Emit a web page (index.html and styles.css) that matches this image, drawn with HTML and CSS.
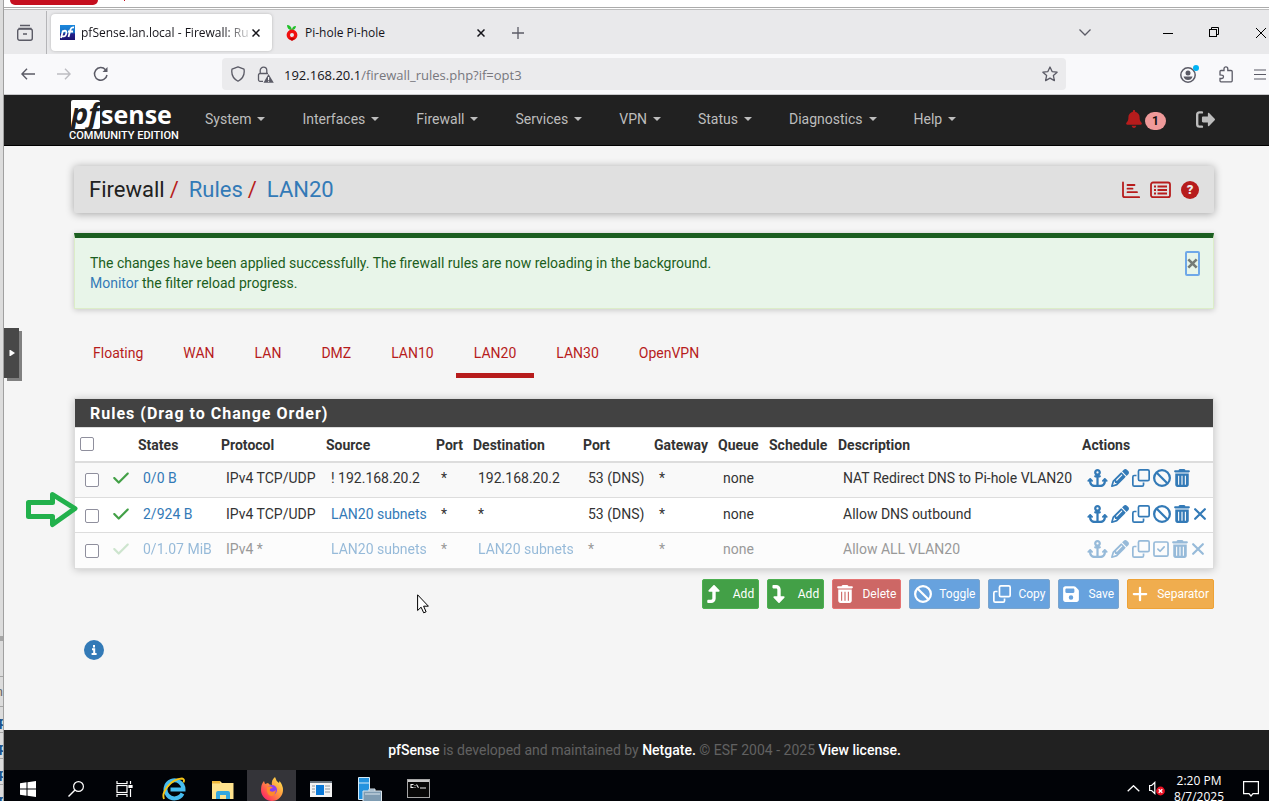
FILE: index.html
```html
<!DOCTYPE html>
<html lang="en">
<head>
<meta charset="utf-8">
<title>pfSense.lan.local - Firewall: Rules: LAN20</title>
<link rel="stylesheet" href="styles.css">
</head>
<body>
<svg class="sprite" aria-hidden="true">
  <symbol id="check" viewBox="0 0 448 512"><path fill="currentColor" d="M438.600 105.400c12.500 12.500 12.500 32.800 0 45.300l-256 256c-12.500 12.500-32.800 12.500-45.300 0l-128-128c-12.500-12.500-12.500-32.800 0-45.300s32.800-12.500 45.300 0L160 338.700 393.400 105.400c12.500-12.500 32.800-12.500 45.300 0z"/></symbol>
  <symbol id="anchor" viewBox="0 0 576 512"><path fill="currentColor" d="M320 96a32 32 0 1 1 -64 0 32 32 0 1 1 64 0zm21.100 80C367 158.800 384 129.400 384 96c0-53-43-96-96-96s-96 43-96 96c0 33.400 17 62.800 42.900 80H224c-17.700 0-32 14.300-32 32s14.300 32 32 32h32V448H208c-53 0-96-43-96-96v-6.100l7 7c9.400 9.400 24.600 9.400 33.900 0s9.400-24.600 0-33.900L97 263c-9.400-9.400-24.600-9.400-33.900 0L7 319c-9.400 9.400-9.400 24.600 0 33.900s24.600 9.400 33.900 0l7-7V352c0 88.400 71.600 160 160 160h160c88.400 0 160-71.600 160-160v-6.100l7 7c9.400 9.400 24.600 9.400 33.900 0s9.400-24.600 0-33.900l-56-56c-9.400-9.400-24.600-9.400-33.900 0l-56 56c-9.400 9.400-9.400 24.600 0 33.900s24.600 9.400 33.900 0l7-7V352c0 53-43 96-96 96H320V240h32c17.700 0 32-14.300 32-32s-14.300-32-32-32H341.100z"/></symbol>
  <symbol id="pencil" viewBox="0 0 512 512"><path fill="currentColor" d="M410.300 231l11.300-11.300-33.900-33.900-62.100-62.100L291.700 89.800l-11.300 11.300-22.600 22.600L58.600 322.900c-10.400 10.400-18 23.300-22.200 37.400L1 480.700c-2.500 8.400-.2 17.500 6.100 23.700s15.300 8.500 23.700 6.100l120.300-35.400c14.100-4.200 27-11.800 37.400-22.200L387.700 253.700 410.300 231zM160 399.400l-9.100 22.700c-4 3.100-8.500 5.400-13.300 6.900L59.400 452l23-78.100c1.400-4.900 3.800-9.400 6.900-13.300l22.700-9.100v32c0 8.800 7.200 16 16 16h32zM362.700 18.700L348.300 33.200 325.700 55.800 314.300 67.100l33.900 33.900 62.100 62.100 33.900 33.900 11.300-11.300 22.600-22.600 14.500-14.500c25-25 25-65.500 0-90.500L453.300 18.700c-25-25-65.500-25-90.500 0zm-47.400 168l-144 144c-6.200 6.200-16.400 6.200-22.600 0s-6.200-16.400 0-22.600l144-144c6.200-6.200 16.400-6.200 22.600 0s6.200 16.400 0 22.600z"/></symbol>
  <symbol id="clone" viewBox="0 0 512 512"><g fill="none" stroke="currentColor" stroke-width="48"><rect x="184" y="24" width="304" height="304" rx="40"/><path d="M128 184H64a40 40 0 0 0-40 40v224a40 40 0 0 0 40 40h224a40 40 0 0 0 40-40v-64"/></g></symbol>
  <symbol id="ban" viewBox="0 0 512 512"><g fill="none" stroke="currentColor" stroke-width="64"><circle cx="256" cy="256" r="224"/><path d="M98 98l316 316"/></g></symbol>
  <symbol id="trash" viewBox="0 0 448 512"><path fill="currentColor" fill-rule="evenodd" d="M135.200 17.700C140.600 6.800 151.700 0 163.800 0H284.200c12.100 0 23.200 6.800 28.600 17.700L320 32h96c17.700 0 32 14.300 32 32s-14.300 32-32 32H32C14.300 96 0 81.700 0 64s14.300-32 32-32h96zM32 128H416V448c0 35.300-28.700 64-64 64H96c-35.300 0-64-28.700-64-64zM112 192v256h32V192zM208 192v256h32V192zM304 192v256h32V192z"/></symbol>
  <symbol id="xmark" viewBox="0 0 384 512"><path fill="none" stroke="currentColor" stroke-width="62" stroke-linecap="round" d="M54 118l276 276M330 118L54 394"/></symbol>
  <symbol id="square-check" viewBox="0 0 448 512"><g fill="none" stroke="currentColor" stroke-width="48"><rect x="24" y="56" width="400" height="400" rx="40"/><path stroke-linecap="round" stroke-linejoin="round" d="M136 260l62 60 116-124"/></g></symbol>
  <symbol id="turn-up" viewBox="0 0 384 512"><path fill="currentColor" d="M350 177.500c3.800-8.800 2-19-4.600-26l-136-144C204.900 2.700 198.600 0 192 0s-12.900 2.700-17.400 7.500l-136 144c-6.600 7-8.400 17.200-4.600 26S46.400 192 56 192h88v192c0 17.700-14.300 32-32 32H32c-17.700 0-32 14.300-32 32v32c0 17.700 14.300 32 32 32h80c70.700 0 128-57.300 128-128V192h88c9.600 0 18.200-5.700 22-14.500z"/></symbol>
  <symbol id="turn-down" viewBox="0 0 384 512"><use href="#turn-up" width="384" height="512" transform="matrix(1 0 0 -1 0 512)"/></symbol>
  <symbol id="floppy" viewBox="0 0 448 512"><path fill="currentColor" fill-rule="evenodd" d="M64 32C28.700 32 0 60.700 0 96v320c0 35.300 28.700 64 64 64h320c35.300 0 64-28.700 64-64V173c0-17-6.700-33-18.700-45L352 51c-12-12-28-19-45-19zM64 128c0-18 14-32 32-32h192c18 0 32 14 32 32v64c0 18-14 32-32 32H96c-18 0-32-14-32-32zM224 288a64 64 0 1 1 0 128 64 64 0 1 1 0-128z"/></symbol>
  <symbol id="plus" viewBox="0 0 448 512"><path fill="none" stroke="currentColor" stroke-width="64" stroke-linecap="round" d="M224 80v352M48 256h352"/></symbol>
  <symbol id="bell" viewBox="0 0 448 512"><path fill="currentColor" d="M224 0c-17.700 0-32 14.300-32 32V51.200C119 66 64 130.600 64 208v18.800c0 47-17.300 92.400-48.500 127.600l-7.400 8.300c-8.400 9.400-10.400 22.900-5.300 34.400S19.400 416 32 416H416c12.600 0 24-7.400 29.200-18.900s3.100-25-5.300-34.400l-7.400-8.300C401.300 319.200 384 273.900 384 226.800V208c0-77.400-55-142-128-156.800V32c0-17.700-14.300-32-32-32zm45.300 493.300c12-12 18.700-28.300 18.700-45.300H160c0 17 6.700 33.300 18.700 45.300s28.300 18.700 45.300 18.700s33.300-6.700 45.300-18.700z"/></symbol>
  <symbol id="signout" viewBox="0 0 512 512"><path fill="none" stroke="currentColor" stroke-width="64" stroke-linecap="round" d="M160 64H96a64 64 0 0 0-64 64v256a64 64 0 0 0 64 64h64"/><path fill="currentColor" d="M320 96c0-18 20-26 33-14l150 154c11 12 11 28 0 40L353 430c-13 12-33 4-33-14v-80H192c-18 0-32-14-32-32v-96c0-18 14-32 32-32h128z"/></symbol>
</svg>

<div class="desktop">
  <aside class="behind-left" aria-hidden="true">
    <i class="notch"></i>
    <span>n</span><b>p</b><b>p</b><b>p</b><b>p</b>
  </aside>
  <div class="window">
    <div class="behind-top"><i class="pill"></i><i class="tick"></i></div>

    <header class="tabbar">
      <button class="recent" aria-label="Recent browsing"><svg width="18" height="18" viewBox="0 0 18 18" fill="none" stroke="#5b5b66" stroke-width="1.400"><path d="M4 1.500h10M2.500 4.500h13"/><path d="M1.700 7a2 2 0 0 1 2-2h10.600a2 2 0 0 1 2 2v7.300a2 2 0 0 1-2 2H3.700a2 2 0 0 1-2-2zM7 10h4"/></svg></button>
      <div class="tab active">
        <svg width="15" height="15" viewBox="0 0 15 15"><defs><linearGradient id="fav" x1="0" y1="0" x2="0" y2="1"><stop offset="0" stop-color="#1a88dd"/><stop offset=".5" stop-color="#1a6fc4"/><stop offset=".6" stop-color="#23208a"/><stop offset="1" stop-color="#1c1470"/></linearGradient></defs><rect width="15" height="15" fill="url(#fav)"/><g fill="none" stroke="#fff" stroke-width="1.800"><path d="M1 13L3 5.500M2.500 6.500c4-2 4.500.5 3.500 3s-3 2-4 1.500"/><path d="M8.500 12l2-7.500q.8-2.500 3.500-2M8 6.500h5"/></g></svg>
        <span class="tab-title">pfSense.lan.local - Firewall: Rules</span>
        <button class="tab-close" aria-label="Close tab"><svg width="8" height="8" viewBox="0 0 8 8"><path d="M.5.5l7 7M7.500.5l-7 7" stroke="#15141a" stroke-width="1.500"/></svg></button>
      </div>
      <div class="tab second">
        <svg width="12" height="17" viewBox="0 0 12 17"><path d="M1 1q4 0 5 5Q1 6 1 1zM6 6q0-4 4-4-.5 4-4 4z" fill="#1fc129"/><circle cx="6" cy="11" r="3.700" fill="none" stroke="#f01010" stroke-width="3.400"/><path d="M3 14l3 3 3-3z" fill="#c40000"/></svg>
        <span class="tab-title">Pi-hole Pi-hole</span>
        <button class="tab-close" aria-label="Close tab"><svg width="8" height="8" viewBox="0 0 8 8"><path d="M.5.5l7 7M7.500.5l-7 7" stroke="#15141a" stroke-width="1.500"/></svg></button>
      </div>
      <button class="newtab" aria-label="New tab"><svg width="12" height="12" viewBox="0 0 12 12"><path d="M6 0v12M0 6h12" stroke="#5b5b66" stroke-width="1.300"/></svg></button>
      <div class="winctl">
        <button aria-label="List all tabs"><svg width="12" height="7" viewBox="0 0 12 7"><path d="M.5.5L6 6l5.500-5.500" fill="none" stroke="#5b5b66" stroke-width="1.300"/></svg></button>
        <button class="min" aria-label="Minimize"><svg width="10" height="10" viewBox="0 0 10 10"><path d="M0 5.500h10" stroke="#000"/></svg></button>
        <button aria-label="Restore"><svg width="11" height="11" viewBox="0 0 11 11" fill="none" stroke="#000"><rect x=".5" y="2.500" width="7" height="7"/><path d="M2.500 2.500v-2h7v7h-2"/></svg></button>
        <button aria-label="Close"><svg width="10" height="10" viewBox="0 0 10 10"><path d="M0 0l10 10M10 0L0 10" stroke="#000"/></svg></button>
      </div>
    </header>

    <div class="toolbar">
      <div class="navbtns">
        <button aria-label="Back"><svg width="14" height="12" viewBox="0 0 14 12"><path d="M14 6H1M6 .7L.9 6 6 11.300" fill="none" stroke="#5b5b66" stroke-width="1.400"/></svg></button>
        <button aria-label="Forward" disabled><svg width="14" height="12" viewBox="0 0 14 12"><path d="M0 6h13M8 .7L13.100 6 8 11.300" fill="none" stroke="#bdbdc2" stroke-width="1.400"/></svg></button>
        <button aria-label="Reload"><svg width="16" height="16" viewBox="0 0 16 16"><path d="M14 9a6.300 6.300 0 1 1-1.500-5.300" fill="none" stroke="#5b5b66" stroke-width="1.500"/><path d="M14.500 1v5H9.500z" fill="#5b5b66"/></svg></button>
      </div>
      <div class="urlbar">
        <svg width="16" height="16" viewBox="0 0 16 16"><path d="M8 .8l6 2.400q1.400 8-6 12-7.400-4-6-12z" fill="none" stroke="#5b5b66" stroke-width="1.300" stroke-linejoin="round"/></svg>
        <svg class="lock" width="17" height="17" viewBox="0 0 17 17"><path d="M6 15.300H3a1.500 1.500 0 0 1-1.500-1.500V9A1.500 1.500 0 0 1 3 7.500h8M3.200 7V4.500a3.300 3.300 0 0 1 6.600 0V7" fill="none" stroke="#5b5b66" stroke-width="1.300"/><path d="M11.500 8L16.800 16.800H6.500z" fill="#5b5b66"/><path d="M11.600 11v3M11.600 14.700v1" stroke="#fff" stroke-width="1.100"/></svg>
        <div class="url">192.168.20.1<span>/firewall_rules.php?if=opt3</span></div>
        <button aria-label="Bookmark"><svg width="16" height="16" viewBox="0 0 16 16"><path d="M8 1l2.100 4.600 5 .6-3.700 3.400 1 5L8 12.100l-4.400 2.500 1-5L.9 6.200l5-.6z" fill="none" stroke="#5b5b66" stroke-width="1.300" stroke-linejoin="round"/></svg></button>
      </div>
      <div class="tools">
        <button aria-label="Account"><svg width="20" height="20" viewBox="0 0 20 20"><circle cx="9" cy="11" r="7.200" fill="none" stroke="#5b5b66" stroke-width="1.500"/><circle cx="9" cy="9" r="2.500" fill="#5b5b66"/><path d="M4.500 12.500h9q-1 3.500-4.500 3.500t-4.500-3.500z" fill="#5b5b66"/><circle cx="17" cy="4" r="3" fill="#00b3f4"/></svg></button>
        <button aria-label="Extensions"><svg width="15" height="17" viewBox="0 0 15 17"><path d="M1 9V5.500q0-1 1-1h3V2.800a1.900 1.900 0 0 1 3.800 0v1.700H12q1.200 0 1.200 1v9.300q0 1-1 1H2q-1 0-1-1V12.500h1.800a1.700 1.700 0 0 0 0-3.400z" fill="none" stroke="#5b5b66" stroke-width="1.300"/></svg></button>
        <button aria-label="Menu"><svg width="12" height="11" viewBox="0 0 12 11"><path d="M0 1h12M0 5.500h12M0 10h12" stroke="#5b5b66" stroke-width="1.200"/></svg></button>
      </div>
    </div>

    <nav class="navbar">
      <a class="brand" href="#"><span class="brand-name"><span class="pf">pf</span>sense</span><span class="edition">COMMUNITY EDITION</span></a>
      <a href="#" class="menu">System</a><a href="#" class="menu">Interfaces</a><a href="#" class="menu">Firewall</a><a href="#" class="menu">Services</a><a href="#" class="menu">VPN</a><a href="#" class="menu">Status</a><a href="#" class="menu">Diagnostics</a><a href="#" class="menu">Help</a>
      <div class="nav-right">
        <a href="#" class="alerts" aria-label="Notices"><svg width="16" height="18"><use href="#bell"/></svg><span class="badge">1</span></a>
        <a href="#" class="logout" aria-label="Log out"><svg width="19" height="19"><use href="#signout"/></svg></a>
      </div>
    </nav>

    <main>
      <header class="page-header">
        <h1>Firewall<i>/</i><a href="#">Rules</a><i>/</i><a href="#">LAN20</a></h1>
        <div class="header-icons">
          <a href="#" aria-label="Status"><svg width="18" height="18" viewBox="0 0 18 18" fill="none" stroke="currentColor" stroke-width="1.800" stroke-linecap="round"><path d="M1 1.500v13q0 1.700 1.700 1.700H17.200M5.500 4h7M5.500 7.700h5M5.500 11.200h9.500"/></svg></a>
          <a href="#" aria-label="Log"><svg width="21" height="18" viewBox="0 0 21 18" fill="none" stroke="currentColor" stroke-width="1.800"><rect x="1" y="1.500" width="19" height="14.700" rx="2"/><path d="M4 5.500h2M7.500 5.500H17M4 9h2M7.500 9H17M4 12.500h2M7.500 12.500H17"/></svg></a>
          <a href="#" class="help" aria-label="Help">?</a>
        </div>
      </header>

      <div class="alert" role="alert">
        <p>The changes have been applied successfully. The firewall rules are now reloading in the background.<br><a href="#">Monitor</a> the filter reload progress.</p>
        <button class="dismiss" aria-label="Close"><svg width="11" height="11" viewBox="0 0 10 10"><path d="M1.200 1.200l7.600 7.600M8.800 1.200L1.200 8.800" stroke="#747b75" stroke-width="2.400"/></svg></button>
      </div>

      <nav class="iface-tabs">
        <a href="#">Floating</a><a href="#">WAN</a><a href="#">LAN</a><a href="#">DMZ</a><a href="#">LAN10</a><a href="#" class="current">LAN20</a><a href="#">LAN30</a><a href="#">OpenVPN</a>
      </nav>

      <section class="panel">
        <h2>Rules (Drag to Change Order)</h2>
        <table>
          <colgroup><col class="c-box"><col class="c-ok"><col class="c-states"><col class="c-proto"><col class="c-addr"><col class="c-port"><col class="c-addr"><col class="c-dport"><col class="c-gw"><col class="c-queue"><col class="c-sched"><col><col class="c-act"></colgroup>
          <thead><tr><th><input type="checkbox" aria-label="Select all"></th><th></th><th>States</th><th>Protocol</th><th>Source</th><th>Port</th><th>Destination</th><th>Port</th><th>Gateway</th><th>Queue</th><th>Schedule</th><th>Description</th><th>Actions</th></tr></thead>
          <tbody>
            <tr><td><input type="checkbox" aria-label="Select rule 1"></td><td><svg class="ok" width="16" height="18"><use href="#check"/></svg></td><td><a href="#">0/0 B</a></td><td>IPv4 TCP/UDP</td><td>! 192.168.20.2</td><td>*</td><td>192.168.20.2</td><td>53 (DNS)</td><td>*</td><td>none</td><td></td><td>NAT Redirect DNS to Pi-hole VLAN20</td>
              <td><div class="actions"><a href="#" aria-label="Move"><svg width="21" height="18"><use href="#anchor"/></svg></a><a href="#" aria-label="Edit"><svg width="18" height="18"><use href="#pencil"/></svg></a><a href="#" aria-label="Copy"><svg width="18" height="18"><use href="#clone"/></svg></a><a href="#" aria-label="Disable"><svg width="18" height="18"><use href="#ban"/></svg></a><a href="#" aria-label="Delete"><svg width="16" height="18"><use href="#trash"/></svg></a></div></td></tr>
            <tr><td><input type="checkbox" aria-label="Select rule 2"></td><td><svg class="ok" width="16" height="18"><use href="#check"/></svg></td><td><a href="#">2/924 B</a></td><td>IPv4 TCP/UDP</td><td><a href="#">LAN20 subnets</a></td><td>*</td><td>*</td><td>53 (DNS)</td><td>*</td><td>none</td><td></td><td>Allow DNS outbound</td>
              <td><div class="actions"><a href="#" aria-label="Move"><svg width="21" height="18"><use href="#anchor"/></svg></a><a href="#" aria-label="Edit"><svg width="18" height="18"><use href="#pencil"/></svg></a><a href="#" aria-label="Copy"><svg width="18" height="18"><use href="#clone"/></svg></a><a href="#" aria-label="Disable"><svg width="18" height="18"><use href="#ban"/></svg></a><a href="#" aria-label="Delete"><svg width="16" height="18"><use href="#trash"/></svg></a><a href="#" aria-label="Kill states"><svg width="14" height="18"><use href="#xmark"/></svg></a></div></td></tr>
            <tr class="disabled"><td><input type="checkbox" aria-label="Select rule 3"></td><td><svg class="ok" width="16" height="18"><use href="#check"/></svg></td><td><a href="#">0/1.07 MiB</a></td><td>IPv4 *</td><td><a href="#">LAN20 subnets</a></td><td>*</td><td><a href="#">LAN20 subnets</a></td><td>*</td><td>*</td><td>none</td><td></td><td>Allow ALL VLAN20</td>
              <td><div class="actions"><a href="#" aria-label="Move"><svg width="21" height="18"><use href="#anchor"/></svg></a><a href="#" aria-label="Edit"><svg width="18" height="18"><use href="#pencil"/></svg></a><a href="#" aria-label="Copy"><svg width="18" height="18"><use href="#clone"/></svg></a><a href="#" aria-label="Enable"><svg width="16" height="18"><use href="#square-check"/></svg></a><a href="#" aria-label="Delete"><svg width="16" height="18"><use href="#trash"/></svg></a><a href="#" aria-label="Kill states"><svg width="14" height="18"><use href="#xmark"/></svg></a></div></td></tr>
          </tbody>
        </table>
      </section>

      <div class="buttons">
        <button class="green"><svg width="14" height="18"><use href="#turn-up"/></svg><span>Add</span></button>
        <button class="green"><svg width="14" height="18"><use href="#turn-down"/></svg><span>Add</span></button>
        <button class="red"><svg width="16" height="18"><use href="#trash"/></svg><span>Delete</span></button>
        <button class="blue"><svg width="18" height="18"><use href="#ban"/></svg><span>Toggle</span></button>
        <button class="blue"><svg width="18" height="18"><use href="#clone"/></svg><span>Copy</span></button>
        <button class="blue"><svg width="16" height="18"><use href="#floppy"/></svg><span>Save</span></button>
        <button class="orange"><svg width="16" height="18"><use href="#plus"/></svg><span>Separator</span></button>
      </div>

      <button class="info" aria-label="Information"><svg width="20" height="20" viewBox="0 0 20 20"><circle cx="10" cy="10" r="10" fill="#337ab7"/><path d="M10 5v2.400M8 9.300h2.200V14M7.600 14h5" fill="none" stroke="#fff" stroke-width="2"/></svg></button>
    </main>

    <footer><a href="#">pfSense</a> is developed and maintained by <a href="#">Netgate.</a> © ESF 2004 - 2025 <a href="#">View license.</a></footer>

    <div class="taskbar">
      <button class="start" aria-label="Start"><svg width="16" height="16" viewBox="0 0 16 16" fill="#fff"><path d="M0 2.300L6.500 1.300V7.500H0zM7.500 1.200L16 0v7.500H7.500zM0 8.500h6.500v6.200L0 13.800zM7.500 8.500H16V16L7.500 14.800z"/></svg></button>
      <button aria-label="Search"><svg width="16" height="16" viewBox="0 0 16 16"><circle cx="10.500" cy="5.500" r="4.900" fill="none" stroke="#fff" stroke-width="1.200"/><path d="M7 9L.5 15.500" stroke="#fff" stroke-width="1.400"/></svg></button>
      <button aria-label="Task view"><svg width="17" height="16" viewBox="0 0 17 16" fill="none" stroke="#fff" stroke-width="1.200"><path d="M1 0v2.500h10V0M1 16v-2.500h10V16M14.500 0v3M14.500 8v8"/><rect x="1" y="4.500" width="10" height="7"/><path d="M13 4.500h3v2h-3z" fill="#fff"/></svg></button>
      <button aria-label="Internet Explorer"><svg width="24" height="24" viewBox="0 0 24 24"><path d="M20.500 16.500A9 9 0 1 1 21.500 12.500H8.500" fill="none" stroke="#47bdf0" stroke-width="4"/><path d="M2 22C-1 15 9 2 20 1.500q3 .5 1.500 4" fill="none" stroke="#f5c518" stroke-width="1.900"/></svg></button>
      <button aria-label="File Explorer"><svg width="22" height="20" viewBox="0 0 22 20"><path d="M0 2h8l2 2h11.500v16H0z" fill="#ffe38d"/><path d="M0 2h8v2.500H0z" fill="#f0b83a"/><path d="M4 20v-6q0-2 2-2h10q2 0 2 2v6h-4v-4H8v4z" fill="#35a8e0"/></svg></button>
      <button class="running" aria-label="Firefox"><svg width="24" height="24" viewBox="0 0 24 24"><defs><linearGradient id="fox" x1="1" y1="0" x2="0" y2="1"><stop offset="0" stop-color="#fff44f"/><stop offset=".45" stop-color="#ff9640"/><stop offset=".8" stop-color="#ff3a5a"/><stop offset="1" stop-color="#e0169c"/></linearGradient></defs><path d="M1 13q0-6 3-9l1 3 3-1q1 2 4 2-1-5 3-8 1 4 4 6l.5-2Q23 8 23 13a11 11 0 0 1-22 0z" fill="url(#fox)"/><circle cx="12" cy="13" r="5" fill="#8a3ff0"/><path d="M7 10q4-2 6 1-4 0-3 3 3 2 6-1-1 6-5 6-5-1-4-9z" fill="#ff8a2a"/></svg></button>
      <button aria-label="Application"><svg width="22" height="16" viewBox="0 0 22 16"><rect width="22" height="16" fill="#f3f3f3"/><path d="M0 0h22v2H0z" fill="#6c7680"/><rect x="6" y="4" width="8" height="10" fill="#0a78d7"/><path d="M2 5h3M2 8h3M2 11h3M15 5h5M15 8h5M15 11h5" stroke="#8d959c"/></svg></button>
      <button aria-label="Server Manager"><svg width="24" height="26" viewBox="0 0 24 26"><path d="M.5 1.500h11v22H.5z" fill="#2493df" stroke="#d7ecf9"/><path d="M1 7h10" stroke="#d7ecf9"/><path d="M5 15h18.500v11H5zM11 15v-2h6v2" fill="#7f9cb2" stroke="#dce6ed"/><path d="M7 18h15" stroke="#dce6ed"/></svg></button>
      <button aria-label="Command Prompt"><svg width="23" height="19" viewBox="0 0 23 19"><rect x=".5" y=".5" width="22" height="18" fill="#080808" stroke="#a6a6a6"/><path d="M1 1h21v2H1z" fill="#c9c9c9"/><path d="M6.500 5.500H4v3h2.500M8 6v.8M8 8v.8M9.500 5.500l2 3.200M13 9h6" fill="none" stroke="#eee" stroke-width="1.100"/></svg></button>
      <div class="tray">
        <svg width="13" height="7" viewBox="0 0 13 7"><path d="M.7 6.300L6.500.7l5.800 5.600" fill="none" stroke="#fff" stroke-width="1.300"/></svg>
        <svg width="16" height="15" viewBox="0 0 16 15"><path d="M.6 4.500h2l3.200-3v11l-3.200-3h-2z" fill="none" stroke="#fff" stroke-width="1.200"/><circle cx="11.500" cy="10" r="4.400" fill="#e81123"/><path d="M9.700 8.200l3.600 3.600M13.300 8.200l-3.600 3.600" stroke="#fff" stroke-width="1.300"/></svg>
        <div class="clock">2:20 PM<br>8/7/2025</div>
        <svg width="16" height="16" viewBox="0 0 16 16"><path d="M.6.6h14.800v12H10L8 15l-2-2.400H.6z" fill="none" stroke="#fff" stroke-width="1.200"/></svg>
      </div>
    </div>
  </div>

  <button class="handle" aria-label="Open side panel"><svg width="6" height="6" viewBox="0 0 6 6"><path d="M.5 0h1L6 3 1.500 6h-1z" fill="#fff"/></svg></button>
  <svg class="callout" width="52" height="38" viewBox="0 0 52 38"><path d="M2.500 12.500h24V4.500L49 18.500 26.500 34.500v-8h-24z" fill="none" stroke="#22b14c" stroke-width="5" stroke-linejoin="round"/></svg>
  <svg class="cursor" width="12" height="20" viewBox="0 0 12 20"><path d="M.6.8v15.700l3.500-3.300 2.600 5.600 2.400-1-2.500-5.600h4.800z" fill="#fff" stroke="#000" stroke-width="1"/></svg>
</div>
</body>
</html>
```
FILE: styles.css
```css
* { box-sizing: border-box; }

body {
  margin: 0;
  height: 100vh;
  overflow: hidden;
  background: #f5f5f5;
  color: #333;
  font: 14px/20px Roboto, "Liberation Sans", sans-serif;
}

a { color: #337ab7; text-decoration: none; }
svg { display: block; flex: none; }

button {
  display: flex;
  align-items: center;
  justify-content: center;
  padding: 0;
  border: 0;
  background: none;
  font: inherit;
}

.sprite { position: absolute; width: 0; height: 0; }

.desktop { position: relative; display: flex; min-height: 100vh; }

/* edge of the application behind the window */
.behind-left {
  flex: none;
  display: flex;
  flex-direction: column;
  align-items: flex-end;
  width: 4px;
  height: 100vh;
  overflow: hidden;
  background: #dcdcdc;
  border-right: 1px solid #a0a0a0;
}
.notch { flex: none; width: 4px; height: 5px; margin: 636px 0 35px; background: #a5a5a5; }
.behind-left span, .behind-left b {
  flex: none;
  width: 4px;
  height: 26px;
  border-top: 1px solid #a5a5a5;
  font-size: 13px;
  line-height: 30px;
}
.behind-left span { height: 30px; color: #666; direction: rtl; }
.behind-left b { color: #10508c; }

.window { flex: 1; min-width: 0; display: flex; flex-direction: column; }

.behind-top {
  display: flex;
  height: 10px;
  background: linear-gradient(#fff 7px, #ababab 7px 8px, #fff 8px 9px, #bdbdbd 9px);
}
.pill { width: 88px; height: 5px; margin-left: 6px; border-radius: 0 0 14px 14px; background: #c50f1f; }
.tick { width: 1px; height: 1px; margin-left: 26px; background: #c50f1f; }

/* browser chrome */
.tabbar {
  display: flex;
  height: 44px;
  padding-top: 1px;
  background: #e9e9eb;
  font: 12px/20px "Open Sans", "Noto Sans", sans-serif;
  color: #15141a;
}
.recent { width: 43px; border-right: 1px solid #b5b5b8; }
.tab { display: flex; align-items: center; width: 221px; margin: 3px 0 3px 4px; padding: 0 12px 0 9px; border-radius: 4px; }
.tab.active { background: #fff; box-shadow: 0 0 3px #8888; }
.tab.second { margin-left: 1px; padding: 0 9px 0 13px; }
.tab-title { flex: 1; overflow: hidden; margin: 0 4px 0 6px; white-space: nowrap; }
.second .tab-title { margin-left: 7px; }
.active .tab-title { -webkit-mask-image: linear-gradient(90deg, #000 85%, #0003); mask-image: linear-gradient(90deg, #000 85%, #0003); }
.newtab { width: 48px; }
.winctl { display: flex; margin-left: auto; gap: 36px; padding-right: 3px; }
.winctl .min { margin-left: 36px; }

.toolbar { display: flex; align-items: center; height: 41px; background: #f9f9fb; border-bottom: 1px solid #c9c9cb; }
.navbtns { display: flex; align-items: center; gap: 22px; padding-left: 17px; width: 218px; }
.urlbar {
  flex: 1;
  display: flex;
  align-items: center;
  height: 32px;
  padding: 0 8px;
  border-radius: 4px;
  background: #ebebed;
}
.lock { margin-left: 11px; }
.url { flex: 1; margin-left: 10px; padding-top: 2px; color: #15141a; font: 13px/20px "Open Sans", "Noto Sans", sans-serif; }
.url span { color: #77777d; }
.tools { display: flex; align-items: center; justify-content: flex-end; gap: 20px; width: 203px; padding-right: 3px; }

/* pfSense navigation */
.navbar { display: flex; align-items: center; height: 51px; padding: 0 54px 2px 65px; background: #212121; border-bottom: 1px solid #000; }
.navbar a { color: #bdbdbd; }
.brand { display: flex; flex-direction: column; width: 106px; margin-right: 12px; padding-top: 3px; }
.navbar .brand { color: #fff; }
.brand-name { display: flex; align-items: center; height: 30px; padding-left: 2px; font: bold 25px/28px "Open Sans", sans-serif; }
.pf { width: 29px; height: 29px; margin-right: 1px; border-radius: 2px; background: #fff; color: #212121; font-size: 29px; font-style: italic; line-height: 25px; }
.edition { font-size: 11px; font-weight: 500; line-height: 13px; white-space: nowrap; }
.menu { display: flex; align-items: center; gap: 6px; padding: 0 19px 0 18px; }
.menu::after { content: ""; border: 4px solid transparent; border-top-color: currentColor; border-bottom: 0; }
.nav-right { display: flex; align-items: center; gap: 30px; margin-left: auto; }
.alerts { display: flex; align-items: center; gap: 3px; }
.navbar .alerts { color: #b71c1c; }
.badge { min-width: 21px; height: 18px; margin-top: 4px; border-radius: 9px; background: #ef9a9a; color: #111; font-size: 12px; font-weight: 700; line-height: 18px; text-align: center; }

/* page body */
main { flex: 1; padding: 20px 55px 70px 70px; }

.page-header {
  display: flex;
  align-items: center;
  justify-content: space-between;
  height: 47px;
  padding: 0 15px;
  border-radius: 2px;
  background: #e0e0e0;
  box-shadow: 0 1px 8px #0005;
}
h1 { margin: 0; color: #212121; font-size: 22px; font-weight: 400; line-height: 26px; }
h1 i { margin: 0 10px 0 5px; color: #b71c1c; font-style: normal; }
.header-icons { display: flex; align-items: center; gap: 10px; }
.header-icons a { color: #b71c1c; }
.header-icons .help { width: 18px; height: 18px; border-radius: 50%; background: #b71c1c; color: #eee; font-size: 13px; font-weight: 900; line-height: 18px; text-align: center; }

.alert {
  display: flex;
  justify-content: space-between;
  margin-top: 20px;
  padding: 15px 13px 15px 15px;
  border: 1px solid #dcedc8;
  border-top: 5px solid #1b5e20;
  background: #e8f5e9;
  color: #1b5e20;
  box-shadow: 0 1px 6px #0003;
}
.alert p { margin: 0; }
.dismiss { width: 15px; height: 25px; margin-top: -2px; border: 2px solid #6fa8e8; border-radius: 2px; }

.iface-tabs { display: flex; flex-wrap: wrap; gap: 4px; margin-top: 29px; padding-left: 1px; }
.iface-tabs a { padding: 5px 18px 10px; border-bottom: 5px solid transparent; color: #b71c1c; }
.iface-tabs .current { border-bottom-color: #b71c1c; }

.panel { margin-top: 20px; border: 1px solid #ddd; background: #fff; box-shadow: 0 1px 8px #0003; }
.panel h2 { margin: 0; padding: 5px 15px 3px; background: #424242; color: #fff; font-size: 16px; font-weight: 700; line-height: 20px; letter-spacing: 1px; }

table { width: 100%; border-collapse: collapse; table-layout: fixed; border-top: 1px solid #ddd; }
.c-box { width: 28px; } .c-ok { width: 30px; } .c-states { width: 83px; } .c-proto { width: 105px; }
.c-addr { width: 110px; } .c-port { width: 37px; } .c-dport { width: 71px; } .c-gw { width: 64px; }
.c-queue { width: 51px; } .c-sched { width: 69px; } .c-act { width: 136px; }
th { height: 34px; padding: 2px 0 0 5px; text-align: left; font-weight: 700; white-space: nowrap; }
td { height: 35px; padding: 0 0 3px 10px; border-top: 1px solid #ddd; color: #333; white-space: nowrap; }
tbody tr:first-child td { height: 36px; padding-bottom: 4px; }
thead { border-bottom: 2px solid #ddd; }
tbody tr:nth-child(odd) { background: #f9f9f9; }
tbody tr.disabled { background: #fcfcfc; }
.disabled td > *:not(input) { opacity: .5; }
.disabled td { color: #999; }
.disabled td .ok { opacity: .25; }
input[type="checkbox"] {
  display: block;
  appearance: none;
  width: 14px;
  height: 14px;
  margin: 0;
  border: 1px solid #8f8f9d;
  border-radius: 2px;
  background: #fff;
}
th input[type="checkbox"] { margin-bottom: 2px; }
td input[type="checkbox"] { margin-top: 4px; }
.ok { color: #43a047; }
.actions { display: flex; gap: 3px; }

.buttons { display: flex; justify-content: flex-end; gap: 8px; margin-top: 10px; }
.buttons button {
  display: grid;
  grid-template-columns: 20px 1fr;
  gap: 5px;
  min-width: 57px;
  height: 30px;
  padding: 0 4px;
  border: 1px solid;
  border-radius: 2px;
  color: #fff;
  font-size: 12px;
  line-height: 18px;
}
.buttons .green { background: #43a047; border-color: #4caf50; }
.buttons .red { background: #cd6765; border-color: #e57373; }
.buttons .blue { background: #67a2de; border-color: #7ba4cc; }
.buttons .orange { background: #f0ad4e; border-color: #eea236; }

.info { margin: 31px 0 0 10px; }

footer { padding: 10px 4px 10px 20px; background: #212121; color: #616161; text-align: center; }
footer a { color: #fff; font-weight: 500; }

/* windows taskbar */
.taskbar { display: flex; height: 38px; background: #010307; }
.taskbar button { width: 49px; }
.taskbar .start { width: 47px; }
.taskbar .running { background: #343439; }
.tray { display: flex; align-items: center; gap: 9px; margin-left: auto; padding-right: 10px; color: #fff; font: 12px/16px "Open Sans", "Noto Sans", sans-serif; text-align: center; }
.clock { padding-right: 10px; }

/* things that float over the window */
.handle { position: absolute; left: 4px; top: 328px; width: 15px; height: 50px; background: #484848; box-shadow: 3px 3px #808080; }
.callout { position: absolute; left: 26px; top: 490px; }
.cursor { position: absolute; left: 417px; top: 594px; }
```
